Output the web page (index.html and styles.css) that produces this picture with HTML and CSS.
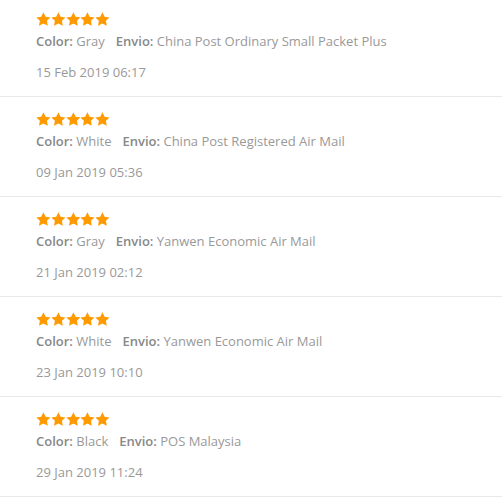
FILE: index.html
```html
<!DOCTYPE html>
<html lang="en">
<head>
  <meta charset="UTF-8">
  <title>Reviews</title>
  <link rel="stylesheet" href="styles.css">
</head>
<body>
  <svg width="0" height="0" class="defs">
    <defs>
      <symbol id="star" viewBox="0 0 24 23">
        <path d="M12 .4l3.6 7.3 8 1.2-5.8 5.6 1.4 8L12 18.7 4.8 22.5l1.4-8L.4 8.9l8-1.2z"/>
      </symbol>
    </defs>
  </svg>
  <div class="reviews">
    <div class="review">
      <div class="stars">
        <svg><use href="#star"/></svg><svg><use href="#star"/></svg><svg><use href="#star"/></svg><svg><use href="#star"/></svg><svg><use href="#star"/></svg>
      </div>
      <div class="info"><span class="item"><b>Color:</b> Gray</span><span class="item"><b>Envio:</b> China Post Ordinary Small Packet Plus</span></div>
      <div class="date">15 Feb 2019 06:17</div>
    </div>
    <div class="review">
      <div class="stars">
        <svg><use href="#star"/></svg><svg><use href="#star"/></svg><svg><use href="#star"/></svg><svg><use href="#star"/></svg><svg><use href="#star"/></svg>
      </div>
      <div class="info"><span class="item"><b>Color:</b> White</span><span class="item"><b>Envio:</b> China Post Registered Air Mail</span></div>
      <div class="date">09 Jan 2019 05:36</div>
    </div>
    <div class="review">
      <div class="stars">
        <svg><use href="#star"/></svg><svg><use href="#star"/></svg><svg><use href="#star"/></svg><svg><use href="#star"/></svg><svg><use href="#star"/></svg>
      </div>
      <div class="info"><span class="item"><b>Color:</b> Gray</span><span class="item"><b>Envio:</b> Yanwen Economic Air Mail</span></div>
      <div class="date">21 Jan 2019 02:12</div>
    </div>
    <div class="review">
      <div class="stars">
        <svg><use href="#star"/></svg><svg><use href="#star"/></svg><svg><use href="#star"/></svg><svg><use href="#star"/></svg><svg><use href="#star"/></svg>
      </div>
      <div class="info"><span class="item"><b>Color:</b> White</span><span class="item"><b>Envio:</b> Yanwen Economic Air Mail</span></div>
      <div class="date">23 Jan 2019 10:10</div>
    </div>
    <div class="review">
      <div class="stars">
        <svg><use href="#star"/></svg><svg><use href="#star"/></svg><svg><use href="#star"/></svg><svg><use href="#star"/></svg><svg><use href="#star"/></svg>
      </div>
      <div class="info"><span class="item"><b>Color:</b> Black</span><span class="item"><b>Envio:</b> POS Malaysia</span></div>
      <div class="date">29 Jan 2019 11:24</div>
    </div>
  </div>
</body>
</html>
```

FILE: styles.css
```css
body {
  margin: 0;
  background: #fff;
  font-family: "Open Sans", "Liberation Sans", sans-serif;
  font-size: 13px;
  color: #999;
}

.defs {
  position: absolute;
}

.reviews {
  margin-top: -3px;
}

.review {
  padding: 15px 0 0 36px;
  height: 84px;
  border-bottom: 1px solid #e8e8e8;
}

.stars {
  display: flex;
  height: 14px;
}

.stars svg {
  width: 14.8px;
  height: 14px;
  fill: #ff9a00;
}

.info {
  margin-top: 6px;
  line-height: 18px;
}

.item {
  margin-right: 11px;
}

.item b {
  font-weight: 600;
  color: #888;
}

.date {
  margin-top: 13px;
  line-height: 18px;
}
```
